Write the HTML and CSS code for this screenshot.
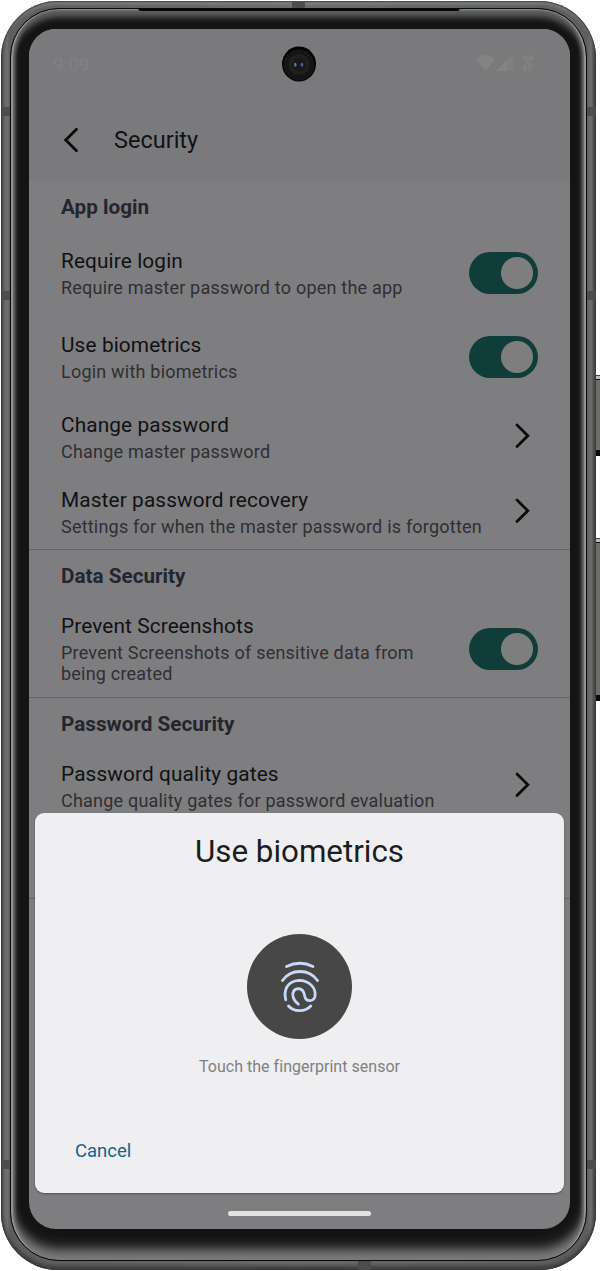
FILE: index.html
```html
<!DOCTYPE html>
<html lang="en">
<head>
<meta charset="utf-8">
<title>Security</title>
<link rel="stylesheet" href="styles.css">
</head>
<body>
<div class="device">
  <i class="side-button power"></i>
  <i class="side-button volume"></i>
  <div class="body">
    <i class="antenna antenna-left a-top"></i>
    <i class="antenna antenna-left a-mid"></i>
    <i class="antenna antenna-left a-low"></i>
    <i class="antenna antenna-right a-top"></i>
    <i class="antenna antenna-right a-mid"></i>
    <i class="antenna antenna-right a-low"></i>
    <i class="antenna antenna-roof"></i>
    <i class="antenna antenna-floor"></i>
    <div class="bezel">
      <i class="speaker"></i>
      <div class="screen">
        <header class="top">
          <div class="status">
            <span>9:09</span>
            <svg width="60" height="20" viewBox="0 0 60 20">
              <path d="M0 6Q9 -2 19 6L9.500 18Z"/>
              <path d="M20 18L37 1V18Z" opacity=".55"/>
              <path d="M20 18L31 7V18Z"/>
              <path d="M47 3h4v3h-4zM52 4l5-3v7h-4v2h4v3h-2v5h-3v-7h-1v7h-4v-5l2-2z" opacity=".7"/>
            </svg>
          </div>
          <div class="appbar">
            <svg width="20" height="28" viewBox="0 0 20 28"><path class="chevron" d="M15.500 3.200L4.700 14L15.500 24.800"/></svg>
            <h1>Security</h1>
          </div>
        </header>
        <main class="settings">
          <section>
            <h2>App login</h2>
            <div class="row tall"><div><h3>Require login</h3><p>Require master password to open the app</p></div><span class="switch"></span></div>
            <div class="row tall"><div><h3>Use biometrics</h3><p>Login with biometrics</p></div><span class="switch"></span></div>
            <div class="row"><div><h3>Change password</h3><p>Change master password</p></div><svg class="next" width="20" height="28" viewBox="0 0 20 28"><path class="chevron" d="M5 3L15.800 13.800L5 24.600"/></svg></div>
            <div class="row"><div><h3>Master password recovery</h3><p>Settings for when the master password is forgotten</p></div><svg class="next" width="20" height="28" viewBox="0 0 20 28"><path class="chevron" d="M5 3L15.800 13.800L5 24.600"/></svg></div>
          </section>
          <section>
            <h2>Data Security</h2>
            <div class="row triple"><div><h3>Prevent Screenshots</h3><p>Prevent Screenshots of sensitive data from<br>being created</p></div><span class="switch"></span></div>
          </section>
          <section class="last">
            <h2>Password Security</h2>
            <div class="row"><div><h3>Password quality gates</h3><p>Change quality gates for password evaluation</p></div><svg class="next" width="20" height="28" viewBox="0 0 20 28"><path class="chevron" d="M5 3L15.800 13.800L5 24.600"/></svg></div>
          </section>
        </main>
        <div class="camera">
          <svg width="34" height="36" viewBox="0 0 34 36">
            <ellipse cx="17" cy="18" rx="17" ry="17.500" fill="#020202"/>
            <circle cx="17" cy="19" r="15.500" fill="#151515"/>
            <circle cx="17" cy="18.500" r="10.500" fill="#202022"/>
            <circle cx="17" cy="18.500" r="7" fill="#18191d"/>
            <ellipse cx="13.300" cy="18.800" rx="1.300" ry="2" fill="#4b8286"/>
            <ellipse cx="20" cy="18.800" rx="1.300" ry="2" fill="#4b5faa"/>
          </svg>
        </div>
        <div class="sheet">
          <h4>Use biometrics</h4>
          <div class="finger">
            <svg width="105" height="105" viewBox="0 0 105 105">
              <path d="M39.500 32.500Q53 26 66 32.500"/>
              <path d="M35.500 46.500C44 34.500 62 34.500 70.500 46.500"/>
              <path d="M38.800 65.800C36.500 57 39.500 47 52 46.300C62.500 46.300 69.500 54.500 68 62.500C66.500 68 59 68 57.800 62.500C57.200 58.500 56.200 54.700 51.500 54.700C47 54.800 45 58.500 46 62.500C46.800 66 48.800 68.400 51.300 70.200"/>
              <path d="M41.500 72C47 78.200 58 78.200 63.800 72"/>
            </svg>
          </div>
          <p class="hint">Touch the fingerprint sensor</p>
          <button class="cancel">Cancel</button>
        </div>
        <i class="home-bar"></i>
      </div>
    </div>
  </div>
</div>
</body>
</html>
```
FILE: styles.css
```css
* { box-sizing: border-box; margin: 0; }
body { background: #fff; font-family: Roboto, sans-serif; }
h1, h2, h3, h4 { font-weight: 400; }
svg { display: block; flex: none; }

.device { position: relative; width: 600px; height: 1271px; padding: 1px 4px 1px 1px; overflow: hidden; }
.side-button { position: absolute; left: 595px; width: 5px; background: linear-gradient(#bbb 0 3px, #111 3px 4px, #6e6d6a 4px calc(100% - 6px), #080808 calc(100% - 6px)); border-top: 1px solid #444; }
.power { top: 375px; height: 81px; }
.volume { top: 538px; height: 163px; }

.body { position: relative; height: 1269px; padding: 7px 9px 9px; border-radius: 57px; background: linear-gradient(90deg, #3c3e3d 0, #606261 2px, #6e706f 6px, #5d5f5e 9px, #6a6c6b 50%, #5d5f5e calc(100% - 9px), #6e706f calc(100% - 5px), #3c3e3d 100%); box-shadow: inset 0 0 2px 1px #3b3d3c, inset 0 4px 3px -1px #858887, inset 0 -4px 4px #3b3c3c; }
.antenna { position: absolute; width: 9px; height: 9px; background: #4c4e4d; }
.antenna-left { left: 1px; }
.antenna-right { right: 0; }
.a-top { top: 106px; }
.a-mid { top: 290px; }
.a-low { top: 1159px; }
.antenna-roof { left: 291px; top: 0; width: 13px; }
.antenna-floor { left: 357px; bottom: 0; width: 13px; }

.bezel { position: relative; height: 1253px; padding: 20px 16px 31px 18px; border-radius: 49px; background: #141414; border: 1px solid #090909;
  box-shadow: inset 0 2px 2px -1px #929392, inset 3px 0 1px -1px #949595, inset -3px 0 1px -1px #949595, inset 0 -7px 9px #7b7c7c, inset 4px 0 3px #606161, inset -4px 0 3px #606161, inset 0 -15px 12px -2px #555656, inset 0 8px 6px #606262; }
.speaker { position: absolute; left: 127px; right: 126px; top: -1px; height: 3px; background: #050505; border-radius: 0 0 4px 4px; }

.screen { position: relative; height: 1200px; width: 541px; background: #7e7e80; border-radius: 27px; overflow: hidden; }
.top { height: 152px; background: #7a7a7c; padding-top: 24px; }
.status { display: flex; justify-content: space-between; height: 47px; padding: 0 34px 0 24px; font-size: 19px; line-height: 24px; color: #818182; fill: #848482; }
.appbar { display: flex; align-items: center; height: 80px; padding-left: 32px; gap: 33px; }
.appbar h1 { font-size: 23.500px; line-height: 28px; color: #111214; }
.chevron { fill: none; stroke: #0b0b0c; stroke-width: 2.800; stroke-linecap: round; stroke-linejoin: miter; }

section { border-bottom: 1px solid #656567; }
section.last { height: 201px; }
h2 { height: 50px; padding: 14px 32px 0; font-size: 20.700px; line-height: 24px; font-weight: 700; color: #25252d; }
.row { display: flex; align-items: center; justify-content: space-between; height: 75px; padding: 1px 32px 0; white-space: nowrap; }
.row.tall { height: 84px; padding: 0 32px; }
.row.triple { height: 97px; padding: 0 32px; }
h3 { font-size: 20.800px; line-height: 26px; color: #101113; letter-spacing: .12px; }
p { font-size: 18px; line-height: 21.500px; margin-top: 3px; color: #2f2f32; letter-spacing: .21px; }
.switch { width: 69px; height: 42px; flex: none; border-radius: 21px; background: radial-gradient(circle at 48px 21px, #7e7e7e 15.500px, #103d3a 16.500px); }
.next { margin: -2px 6px 0 0; }

.camera { position: absolute; left: 253px; top: 17px; }
.sheet { position: absolute; left: 6px; top: 784px; width: 529px; height: 380px; border-radius: 9px; background: #efeff1; box-shadow: 0 1px 2px #505052; display: flex; flex-direction: column; align-items: center; }
.sheet h4 { margin-top: 20px; font-size: 31.300px; line-height: 38px; color: #1b1c1e; }
.finger { width: 105px; height: 105px; margin-top: 63px; border-radius: 50%; background: #474747; }
.finger path { fill: none; stroke: #c9daf8; stroke-width: 2.800; stroke-linecap: round; }
.hint { margin-top: 17px; font-size: 16px; line-height: 22px; color: #808082; letter-spacing: .03px; }
.cancel { align-self: flex-start; margin: 60px 0 0 40px; padding: 0; border: 0; background: none; font: 18.500px/26px Roboto, sans-serif; color: #14658b; }
.home-bar { position: absolute; left: 199px; top: 1182px; width: 143px; height: 5px; border-radius: 3px; background: #e2e2e3; }
```
